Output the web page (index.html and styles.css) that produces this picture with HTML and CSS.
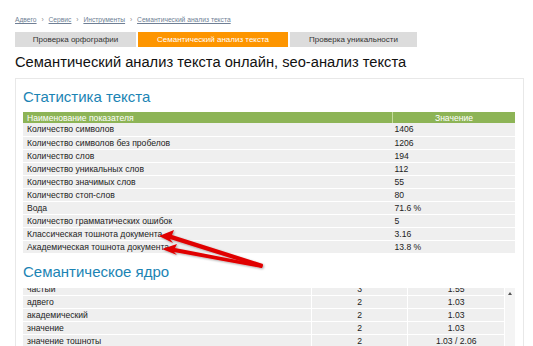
FILE: index.html
```html
<html>

<head>
    <link rel="stylesheet" href="styles.css">
</head>

<body>
    <div class="page">
        <div class="crumbs">
            <a href="#">Адвего</a> <span class="sep">›</span>
            <a href="#">Сервис</a> <span class="sep">›</span>
            <a href="#">Инструменты</a> <span class="sep">›</span>
            <a href="#">Семантический анализ текста</a>
        </div>

        <div class="tabs">
            <div class="tab tab-spell">Проверка орфографии</div>
            <div class="tab tab-seo active">Семантический анализ текста</div>
            <div class="tab tab-uniq">Проверка уникальности</div>
        </div>

        <h1 class="title">Семантический анализ текста онлайн, seo-анализ текста</h1>

        <div class="card">
            <h2 class="card-title">Статистика текста</h2>
            <table class="stats">
                <tr>
                    <th class="name">Наименование показателя</th>
                    <th class="value">Значение</th>
                </tr>
                <tr><td>Количество символов</td><td>1406</td></tr>
                <tr><td>Количество символов без пробелов</td><td>1206</td></tr>
                <tr><td>Количество слов</td><td>194</td></tr>
                <tr><td>Количество уникальных слов</td><td>112</td></tr>
                <tr><td>Количество значимых слов</td><td>55</td></tr>
                <tr><td>Количество стоп-слов</td><td>80</td></tr>
                <tr><td>Вода</td><td>71.6 %</td></tr>
                <tr><td>Количество грамматических ошибок</td><td>5</td></tr>
                <tr><td>Классическая тошнота документа</td><td>3.16</td></tr>
                <tr><td>Академическая тошнота документа</td><td>13.8 %</td></tr>
            </table>

            <h2 class="card-title core-title">Семантическое ядро</h2>
            <div class="core">
                <div class="core-scroll">
                    <table class="words">
                        <tr><td class="word">частый</td><td class="num">3</td><td class="num">1.55</td></tr>
                        <tr><td class="word">адвего</td><td class="num">2</td><td class="num">1.03</td></tr>
                        <tr><td class="word">академический</td><td class="num">2</td><td class="num">1.03</td></tr>
                        <tr><td class="word">значение</td><td class="num">2</td><td class="num">1.03</td></tr>
                        <tr><td class="word">значение тошноты</td><td class="num">2</td><td class="num">1.03 / 2.06</td></tr>
                    </table>
                </div>
                <div class="scrollbar"><span class="scroll-up"></span></div>
            </div>
        </div>

        <svg class="arrows" width="533" height="346" viewBox="0 0 533 346">
            <defs>
                <filter id="shade" x="-10%" y="-50%" width="120%" height="200%">
                    <feDropShadow dx="1" dy="1" stdDeviation="1" flood-color="#000" flood-opacity="0.35" />
                </filter>
            </defs>
            <g fill="#e00000" filter="url(#shade)">
                <polygon points="159,236 174,230 172,235 263,264 262,268 170,239 173,243" />
                <polygon points="162,249 177,244 175,248 263,265 262,268 174,252 177,255" />
            </g>
        </svg>
    </div>
</body>

</html>
```

FILE: styles.css
```css
body {
    margin: 0;
    background-color: #fff;
    font-family: "Liberation Sans", Arial, sans-serif;
    color: #222;
    overflow: hidden;
}

.page {
    position: relative;
    padding: 14px 10px 0 15px;
}

.crumbs {
    font-size: 6.7px;
    height: 12px;
    line-height: 12px;
    color: #8a8a8a;
}

.crumbs a {
    color: #6f7f95;
}

.crumbs .sep {
    margin: 0 3px;
}

.tabs {
    display: flex;
    gap: 2px;
    margin-top: 6px;
}

.tab {
    height: 15px;
    line-height: 15px;
    font-size: 8px;
    text-align: center;
    background-color: #dcdcdc;
    color: #333;
}

.tab-spell {
    width: 121px;
}

.tab-seo {
    width: 150px;
}

.tab-uniq {
    width: 127px;
}

.tab.active {
    background-color: #fd9500;
    color: #fff;
}

.title {
    font-size: 14.7px;
    line-height: 20px;
    font-weight: normal;
    color: #111;
    margin: 5px 0 6px;
}

.card {
    width: 492px;
    height: 300px;
    border: 1px solid #e8e8e8;
    padding: 9px 8px 0 7px;
}

.card-title {
    font-size: 15px;
    line-height: 18px;
    font-weight: normal;
    color: #1b84b4;
    margin: 0 0 6px;
}

.stats {
    width: 100%;
    border-collapse: collapse;
    font-size: 8.6px;
    color: #222;
}

.stats th {
    height: 11px;
    padding: 0 4px;
    background-color: #8db456;
    color: #fff;
    font-weight: normal;
}

.stats th.name {
    text-align: left;
    width: 361px;
    border-right: 1px solid #c5db9f;
}

.stats td {
    height: 13px;
    padding: 0 4px;
    background-color: #efefef;
    border-bottom: 1px solid #fff;
}

.stats td + td {
    padding-left: 2px;
}

.core-title {
    margin-top: 9px;
    margin-bottom: 7px;
}

.core {
    display: flex;
    height: 70px;
}

.core-scroll {
    width: 482px;
    overflow: hidden;
}

.words {
    width: 100%;
    border-collapse: collapse;
    font-size: 8.6px;
    color: #222;
    margin-top: -5px;
}

.words td {
    height: 13px;
    padding: 0 4px;
    background-color: #efefef;
    border-bottom: 1px solid #fff;
}

.words td.word {
    width: 281px;
}

.words td.num {
    width: 88px;
    text-align: center;
    border-left: 1px solid #fff;
}

.scrollbar {
    width: 10px;
    background-color: #f4f4f4;
    border-left: 1px solid #fff;
    position: relative;
}

.scroll-up {
    position: absolute;
    top: 4px;
    left: 3px;
    border-left: 2px solid transparent;
    border-right: 2px solid transparent;
    border-bottom: 3px solid #555;
}

.arrows {
    position: absolute;
    top: 0;
    left: 0;
    pointer-events: none;
}
```
